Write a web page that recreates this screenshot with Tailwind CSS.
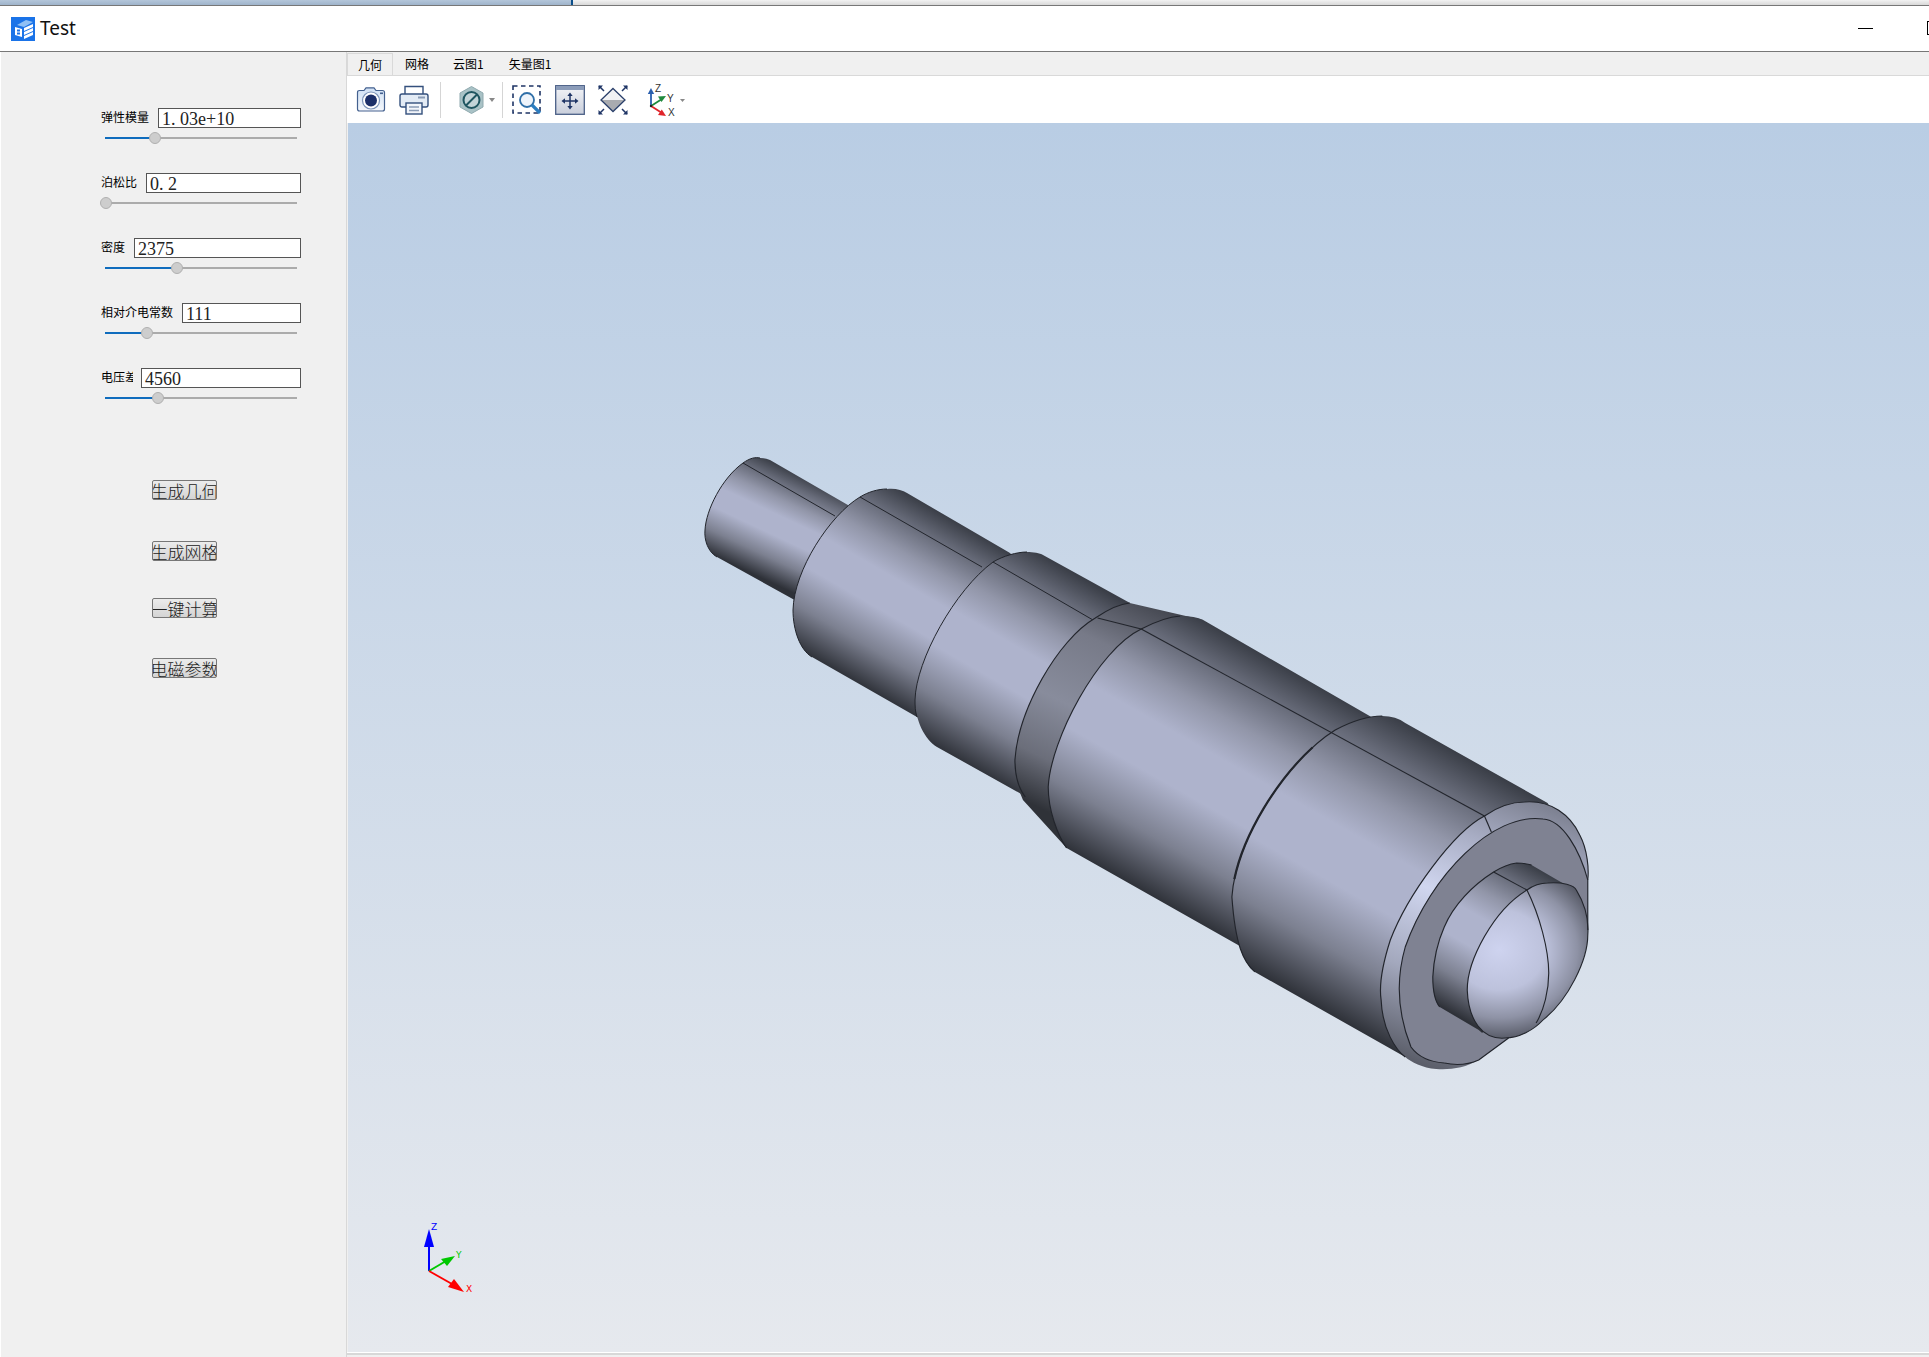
<!DOCTYPE html>
<html lang="zh">
<head>
    <meta charset="UTF-8">
    <title>Test</title>
    <script src="https://cdn.jsdelivr.net/npm/@tailwindcss/browser@4"></script>
</head>
<body class="bg-[#f0f0f0]">
<div class="w-[1929px] h-[1357px] overflow-hidden flex flex-col font-['Noto_Sans_CJK_SC',sans-serif] text-black">

    <!-- window behind -->
    <div class="h-[5px] flex shrink-0">
        <div class="w-[571px] bg-gradient-to-b from-[#b4c6da] to-[#9fb4cb]"></div>
        <div class="w-[2px] bg-[#0b4f8a]"></div>
        <div class="flex-1 bg-gradient-to-b from-[#f2f2f2] to-[#d8d8d8]"></div>
    </div>

    <!-- title bar -->
    <div class="h-[47px] shrink-0 bg-white border-y border-y-[#777] flex items-center relative">
        <svg class="ml-[11px] w-[24px] h-[24px]" viewBox="0 0 24 24">
            <rect width="24" height="24" fill="#1a73e8"/>
            <path d="M6 8 L15 3 L22 5 L13 10Z" fill="#8fc0f5"/>
            <path d="M13 11 L22 7 V10 L13 14Z M13 15 L22 11 V14 L13 18Z M13 19 L22 15 V18 L13 22Z" fill="#fff"/>
            <path d="M4 10 L11 12 V20 L4 18Z" fill="#fff"/>
            <path d="M6 12.5 h3 v2 h-3z M6 15.5 h3 v2 h-3z" fill="#1a73e8"/>
        </svg>
        <span class="ml-[5px] text-[19px] leading-none font-['Noto_Sans',sans-serif] text-[#111]">Test</span>
        <div class="absolute left-[1858px] top-[22px] w-[15px] h-px bg-black"></div>
        <div class="absolute left-[1927px] top-[15px] w-[8px] h-[14px] border border-black"></div>
    </div>

    <div class="flex-1 flex min-h-0">
        <!-- left panel -->
        <div class="w-[346px] shrink-0 border-l border-l-white pl-[100px] pt-[56px]">
            <div class="flex flex-col gap-[27px]">
                <div class="w-[200px]">
                    <div class="flex items-center h-[20px]">
                        <span class="w-[57px] shrink-0 text-[12px] leading-none -mt-[2px]">弹性模量</span>
                        <div class="w-[143px] h-[20px] bg-white border border-[#555] pl-[3px] font-['Liberation_Serif',serif] text-[18px] leading-[20px] text-[#222]">1. 03e+10</div>
                    </div>
                    <div class="relative h-[16px] ml-[4px] mt-[2px] w-[192px] flex items-center">
                        <div class="w-[46px] h-[2px] bg-[#0f6cbd]"></div>
                        <div class="flex-1 h-[2px] bg-[#ababab]"></div>
                        <div class="absolute left-[44px] top-[2px] w-[12px] h-[12px] rounded-full bg-[#cdcdcd] border border-[#b0b0b0]"></div>
                    </div>
                </div>
                <div class="w-[200px]">
                    <div class="flex items-center h-[20px]">
                        <span class="w-[45px] shrink-0 text-[12px] leading-none -mt-[2px]">泊松比</span>
                        <div class="w-[155px] h-[20px] bg-white border border-[#555] pl-[3px] font-['Liberation_Serif',serif] text-[18px] leading-[20px] text-[#222]">0. 2</div>
                    </div>
                    <div class="relative h-[16px] ml-[4px] mt-[2px] w-[192px] flex items-center">
                        <div class="flex-1 h-[2px] bg-[#ababab]"></div>
                        <div class="absolute left-[-5px] top-[2px] w-[12px] h-[12px] rounded-full bg-[#cdcdcd] border border-[#b0b0b0]"></div>
                    </div>
                </div>
                <div class="w-[200px]">
                    <div class="flex items-center h-[20px]">
                        <span class="w-[33px] shrink-0 text-[12px] leading-none -mt-[2px]">密度</span>
                        <div class="w-[167px] h-[20px] bg-white border border-[#555] pl-[3px] font-['Liberation_Serif',serif] text-[18px] leading-[20px] text-[#222]">2375</div>
                    </div>
                    <div class="relative h-[16px] ml-[4px] mt-[2px] w-[192px] flex items-center">
                        <div class="w-[68px] h-[2px] bg-[#0f6cbd]"></div>
                        <div class="flex-1 h-[2px] bg-[#ababab]"></div>
                        <div class="absolute left-[66px] top-[2px] w-[12px] h-[12px] rounded-full bg-[#cdcdcd] border border-[#b0b0b0]"></div>
                    </div>
                </div>
                <div class="w-[200px]">
                    <div class="flex items-center h-[20px]">
                        <span class="w-[81px] shrink-0 text-[12px] leading-none -mt-[2px]">相对介电常数</span>
                        <div class="w-[119px] h-[20px] bg-white border border-[#555] pl-[3px] font-['Liberation_Serif',serif] text-[18px] leading-[20px] text-[#222]">111</div>
                    </div>
                    <div class="relative h-[16px] ml-[4px] mt-[2px] w-[192px] flex items-center">
                        <div class="w-[38px] h-[2px] bg-[#0f6cbd]"></div>
                        <div class="flex-1 h-[2px] bg-[#ababab]"></div>
                        <div class="absolute left-[36px] top-[2px] w-[12px] h-[12px] rounded-full bg-[#cdcdcd] border border-[#b0b0b0]"></div>
                    </div>
                </div>
                <div class="w-[200px]">
                    <div class="flex items-center h-[20px]">
                        <span class="w-[32px] mr-[8px] shrink-0 text-[12px] leading-none -mt-[2px] overflow-hidden whitespace-nowrap">电压差</span>
                        <div class="w-[160px] h-[20px] bg-white border border-[#555] pl-[3px] font-['Liberation_Serif',serif] text-[18px] leading-[20px] text-[#222]">4560</div>
                    </div>
                    <div class="relative h-[16px] ml-[4px] mt-[2px] w-[192px] flex items-center">
                        <div class="w-[49px] h-[2px] bg-[#0f6cbd]"></div>
                        <div class="flex-1 h-[2px] bg-[#ababab]"></div>
                        <div class="absolute left-[47px] top-[2px] w-[12px] h-[12px] rounded-full bg-[#cdcdcd] border border-[#b0b0b0]"></div>
                    </div>
                </div>
            </div>

            <div class="ml-[51px] mt-[74px] flex flex-col items-start">
                <div class="w-[65px] h-[20px] rounded-[2px] border border-[#777] bg-gradient-to-b from-[#ececec] to-[#d4d4d4] overflow-hidden flex justify-center items-center whitespace-nowrap text-[17px] leading-none font-light text-[#222]">生成几何</div>
                <div class="mt-[41px] w-[65px] h-[20px] rounded-[2px] border border-[#777] bg-gradient-to-b from-[#ececec] to-[#d4d4d4] overflow-hidden flex justify-center items-center whitespace-nowrap text-[17px] leading-none font-light text-[#222]">生成网格</div>
                <div class="mt-[37px] w-[65px] h-[20px] rounded-[2px] border border-[#777] bg-gradient-to-b from-[#ececec] to-[#d4d4d4] overflow-hidden flex justify-center items-center whitespace-nowrap text-[17px] leading-none font-light text-[#222]">一键计算</div>
                <div class="mt-[40px] w-[65px] h-[20px] rounded-[2px] border border-[#777] bg-gradient-to-b from-[#ececec] to-[#d4d4d4] overflow-hidden flex justify-center items-center whitespace-nowrap text-[17px] leading-none font-light text-[#222]">电磁参数</div>
            </div>
        </div>

        <!-- right side -->
        <div class="flex-1 min-w-0 flex flex-col border-l border-l-[#d8d8d8]">
            <!-- tabs -->
            <div class="h-[24px] shrink-0 flex items-end border-b border-b-[#d9d9d9] text-[12px] leading-none">
                <div class="h-[23px] -mb-px w-[46px] flex items-center justify-center bg-[#f0f0f0] border border-[#d9d9d9]">几何</div>
                <div class="h-[23px] flex items-center pl-[12px] pr-[12px]">网格</div>
                <div class="h-[23px] flex items-center px-[12px]">云图1</div>
                <div class="h-[23px] flex items-center pl-[13px]">矢量图1</div>
            </div>

            <!-- toolbar -->
            <div class="h-[47px] shrink-0 bg-white flex items-center pl-[8px] border-l border-l-white">
                <!-- camera -->
                <svg class="w-[30px] h-[25px] shrink-0" viewBox="0 0 30 25">
                    <defs><linearGradient id="camBody" x1="0" y1="0" x2="0" y2="1"><stop offset="0" stop-color="#cfe0f4"/><stop offset="1" stop-color="#f4f7fb"/></linearGradient></defs>
                    <path d="M1.5 5.5 Q1.5 3.5 3.5 3.5 H8 L10 .8 H18 L20 3.5 H26.5 Q28.5 3.5 28.5 5.5 V22 Q28.5 24 26.5 24 H3.5 Q1.5 24 1.5 22Z" fill="url(#camBody)" stroke="#44618f" stroke-width="1.2"/>
                    <circle cx="15" cy="13.5" r="8.5" fill="#fff" stroke="#7c94b8" stroke-width="1.2"/>
                    <circle cx="15" cy="13.5" r="6" fill="#1b2f68"/>
                    <rect x="24" y="5.5" width="3" height="1.6" fill="#44618f"/>
                </svg>
                <!-- printer -->
                <svg class="w-[30px] h-[30px] ml-[13px] shrink-0" viewBox="0 0 30 30">
                    <path d="M6 9 V1.5 H24 V9" fill="#fff" stroke="#34507d" stroke-width="1.4"/>
                    <rect x="1" y="9" width="28" height="13" rx="2" fill="#e3ebf5" stroke="#34507d" stroke-width="1.4"/>
                    <rect x="19" y="11.5" width="7" height="2" fill="#8a9cb6"/>
                    <rect x="7" y="18" width="16" height="11" fill="#f2f5fa" stroke="#34507d" stroke-width="1.4"/>
                    <path d="M10 22 H20 M10 25.5 H20" stroke="#8a9cb6" stroke-width="1.5"/>
                </svg>
                <div class="w-px h-[36px] bg-[#d5d5d5] ml-[11px] shrink-0"></div>
                <!-- clip plane -->
                <svg class="w-[25px] h-[28px] ml-[18px] shrink-0" viewBox="0 0 25 28">
                    <path d="M12.5 .5 L24 7 V21 L12.5 27.5 L1 21 V7Z" fill="#a9c2c6" stroke="#8fa9ae"/>
                    <circle cx="12.5" cy="14" r="8" fill="#c3d4d8" stroke="#1f5560" stroke-width="2"/>
                    <path d="M7 19.5 L18 8.5" stroke="#1f5560" stroke-width="2"/>
                </svg>
                <svg class="w-[6px] h-[4px] ml-[5px] shrink-0" viewBox="0 0 6 4"><path d="M0 0H6L3 4Z" fill="#888"/></svg>
                <div class="w-px h-[36px] bg-[#d5d5d5] ml-[7px] shrink-0"></div>
                <!-- zoom window -->
                <svg class="w-[30px] h-[30px] ml-[9px] shrink-0" viewBox="0 0 30 30">
                    <rect x="1" y="1" width="27" height="27" fill="none" stroke="#1f3566" stroke-width="1.6" stroke-dasharray="4.5 3.5"/>
                    <circle cx="15" cy="15" r="7" fill="#eef4fb" stroke="#2f6fa8" stroke-width="1.8"/>
                    <path d="M20 20 L28 28" stroke="#2b7dc0" stroke-width="3.2"/>
                </svg>
                <!-- pan -->
                <svg class="w-[30px] h-[30px] ml-[13px] shrink-0" viewBox="0 0 30 30">
                    <defs><linearGradient id="panBody" x1="0" y1="0" x2="0" y2="1"><stop offset="0" stop-color="#f4f5f8"/><stop offset="1" stop-color="#c9cedb"/></linearGradient></defs>
                    <rect x=".7" y=".7" width="28.6" height="28.6" fill="url(#panBody)" stroke="#4a5f86" stroke-width="1.3"/>
                    <rect x="1" y="1" width="28" height="4" fill="#8b9cb9"/>
                    <path d="M15 9 V23 M8 16 H22" stroke="#1f3566" stroke-width="1.5"/>
                    <path d="M15 7.5 L12.3 11 H17.7Z M15 24.5 L12.3 21 H17.7Z M6.5 16 L10 13.3 V18.7Z M23.5 16 L20 13.3 V18.7Z" fill="#1f3566"/>
                </svg>
                <!-- fit all -->
                <svg class="w-[30px] h-[30px] ml-[13px] shrink-0" viewBox="0 0 30 30">
                    <path d="M15 4 L27 15 H3Z" fill="#f0f1f4"/>
                    <path d="M3 15 H27 L15 26Z" fill="#a9abb0"/>
                    <path d="M15 3.5 L27 15 L15 26.5 L3 15Z" fill="none" stroke="#2a3f6a" stroke-width="1.3"/>
                    <path d="M1 1 L6 6 M29 1 L24 6 M1 29 L6 24 M29 29 L24 24" stroke="#1f3566" stroke-width="1.5"/>
                    <path d="M.5 .5 H5 L.5 5Z M29.5 .5 H25 L29.5 5Z M.5 29.5 H5 L.5 25Z M29.5 29.5 H25 L29.5 25Z" fill="#1f3566"/>
                </svg>
                <!-- view axes -->
                <svg class="w-[40px] h-[34px] ml-[19px] shrink-0" viewBox="0 0 40 34">
                    <path d="M4 23 V9" stroke="#2a5fae" stroke-width="1.8"/>
                    <path d="M4 5 L.8 11 H7.2Z" fill="#2a5fae"/>
                    <path d="M4 23 L15 16" stroke="#1f8a3e" stroke-width="1.8"/>
                    <path d="M19 13 L11 13.5 L14.5 19Z" fill="#1f8a3e"/>
                    <path d="M4 23 L15 30" stroke="#e0252b" stroke-width="1.8"/>
                    <path d="M19 33 L11 32 L14.8 26.5Z" fill="#e0252b"/>
                    <circle cx="4" cy="23" r="1.2" fill="#222"/>
                    <text x="8" y="9" font-size="10" font-family="Liberation Sans" fill="#333">Z</text>
                    <text x="20" y="19" font-size="10" font-family="Liberation Sans" fill="#333">Y</text>
                    <text x="21" y="33" font-size="10" font-family="Liberation Sans" fill="#333">X</text>
                    <path d="M33 16 H38 L35.5 19Z" fill="#888"/>
                </svg>
            </div>

            <!-- 3d viewport -->
            <div class="h-[1229px] shrink-0 ml-px bg-gradient-to-b from-[#b9cde4] to-[#e6e9ee]">
                <svg class="block w-[1581px] h-[1229px]" viewBox="348 123 1581 1229">
                    <defs>
                        <linearGradient id="c1" gradientUnits="userSpaceOnUse" x1="770" y1="460" x2="723" y2="560">
                            <stop offset="0" stop-color="#3a3e47"/><stop offset=".13" stop-color="#666a78"/><stop offset=".28" stop-color="#9296a9"/><stop offset=".42" stop-color="#aeb3cc"/><stop offset=".6" stop-color="#aeb3cc"/><stop offset=".8" stop-color="#7c8090"/><stop offset="1" stop-color="#2e3138"/>
                        </linearGradient>
                        <linearGradient id="c2" gradientUnits="userSpaceOnUse" x1="907" y1="493" x2="812" y2="658">
                            <stop offset="0" stop-color="#3a3e47"/><stop offset=".13" stop-color="#666a78"/><stop offset=".28" stop-color="#9296a9"/><stop offset=".42" stop-color="#aeb3cc"/><stop offset=".6" stop-color="#aeb3cc"/><stop offset=".8" stop-color="#7c8090"/><stop offset="1" stop-color="#2e3138"/>
                        </linearGradient>
                        <linearGradient id="c3" gradientUnits="userSpaceOnUse" x1="1043" y1="555" x2="933" y2="746">
                            <stop offset="0" stop-color="#3a3e47"/><stop offset=".13" stop-color="#666a78"/><stop offset=".28" stop-color="#9296a9"/><stop offset=".42" stop-color="#aeb3cc"/><stop offset=".6" stop-color="#aeb3cc"/><stop offset=".8" stop-color="#7c8090"/><stop offset="1" stop-color="#2e3138"/>
                        </linearGradient>
                        <linearGradient id="c4" gradientUnits="userSpaceOnUse" x1="1177" y1="620" x2="1037" y2="835">
                            <stop offset="0" stop-color="#3a3e47"/><stop offset=".13" stop-color="#666a78"/><stop offset=".28" stop-color="#9296a9"/><stop offset=".42" stop-color="#aeb3cc"/><stop offset=".6" stop-color="#aeb3cc"/><stop offset=".8" stop-color="#7c8090"/><stop offset="1" stop-color="#2e3138"/>
                        </linearGradient>
                        <linearGradient id="c5" gradientUnits="userSpaceOnUse" x1="1353" y1="723" x2="1200" y2="958">
                            <stop offset="0" stop-color="#3a3e47"/><stop offset=".13" stop-color="#666a78"/><stop offset=".28" stop-color="#9296a9"/><stop offset=".42" stop-color="#aeb3cc"/><stop offset=".6" stop-color="#aeb3cc"/><stop offset=".8" stop-color="#7c8090"/><stop offset="1" stop-color="#2e3138"/>
                        </linearGradient>
                        <linearGradient id="band" gradientUnits="userSpaceOnUse" x1="1130" y1="600" x2="1020" y2="800">
                            <stop offset="0" stop-color="#43464f"/><stop offset=".25" stop-color="#777a88"/><stop offset=".55" stop-color="#888c9c"/><stop offset=".8" stop-color="#6b6e7a"/><stop offset="1" stop-color="#2f3238"/>
                        </linearGradient>
                        <linearGradient id="ring" gradientUnits="userSpaceOnUse" x1="1470" y1="800" x2="1350" y2="1060">
                            <stop offset="0" stop-color="#7b7f8f"/><stop offset=".2" stop-color="#a8adc4"/><stop offset=".42" stop-color="#d0d6ef"/><stop offset=".7" stop-color="#a3a8bd"/><stop offset="1" stop-color="#585b66"/>
                        </linearGradient>
                        <linearGradient id="stud" gradientUnits="userSpaceOnUse" x1="1463" y1="865" x2="1375" y2="1001">
                            <stop offset="0" stop-color="#3a3e47"/><stop offset=".13" stop-color="#666a78"/><stop offset=".28" stop-color="#9296a9"/><stop offset=".42" stop-color="#aeb3cc"/><stop offset=".6" stop-color="#aeb3cc"/><stop offset=".8" stop-color="#7c8090"/><stop offset="1" stop-color="#2e3138"/>
                        </linearGradient>
                        <radialGradient id="dome" gradientUnits="userSpaceOnUse" cx="1435" cy="950" r="100">
                            <stop offset="0" stop-color="#ced3ef"/><stop offset=".4" stop-color="#bdc2dc"/><stop offset=".68" stop-color="#8e92a5"/><stop offset="1" stop-color="#3b3e47"/>
                        </radialGradient>
                    </defs>

                    <!-- shaft sections, far to near -->
                    <path fill="url(#c1)" d="M760 458 Q766 458 770 460 L860 512 L800 603 L717 557 C708 552 704 540 705 530 C706 510 722 478 743 463 C750 458 755 457 760 458Z"/>
                    <path fill="url(#c2)" d="M887 489 C895 488 902 490 907 493 L1010 553 L1020 565 L930 725 L917 717 L812 657 C800 650 793 630 793 610 C794 570 830 515 860 497 C868 492 878 489 887 489Z"/>
                    <path fill="url(#c3)" d="M1027 552 C1033 552 1040 553 1043 555 L1130 603 L1125 625 L1030 805 L1023 795 L937 747 C925 740 915 720 915 700 C916 660 955 590 993 562 C1003 556 1017 552 1027 552Z"/>
                    <g fill="none" stroke="#22252c" stroke-width="1">
                        <path d="M717 557 C708 552 704 540 705 530 C706 510 722 478 743 463 C750 458 755 457 760 458"/>
                        <path d="M743 463 L835 516"/>
                        <path d="M812 657 C800 650 793 630 793 610 C794 570 830 515 860 497 C868 492 878 489 887 489"/>
                        <path d="M860 497 L982 567"/>
                        <path d="M917 717 C915 712 915 705 915 700 C916 660 955 590 993 562 C1003 556 1017 552 1027 552"/>
                        <path d="M993 562 L1093 620"/>
                    </g>

                    <g transform="translate(1000 0) scale(1.148 1) translate(-1000 0)">
                        <path fill="url(#band)" d="M1113 603 L1177 620 L1165 650 L1058 848 L1020 800 C1014 785 1013 770 1013 760 C1016 710 1050 640 1083 618 C1092 611 1103 604 1113 603Z"/>
                        <path fill="url(#c4)" d="M1157 616 Q1170 616 1177 620 L1322 716 L1340 730 L1240 930 L1212 948 L1058 848 C1050 835 1042 810 1042 787 C1044 740 1085 650 1123 629 C1133 623 1145 617 1157 616Z"/>
                        <path fill="url(#c5)" d="M1333 716 Q1345 716 1353 723 L1477 803 L1500 850 L1400 1050 L1353 1057 L1222 972 C1212 962 1205 945 1202 897 C1205 840 1250 760 1292 730 C1305 722 1320 716 1333 716Z"/>

                        <!-- end face -->
                        <path fill="url(#ring)" d="M1457 802 C1480 800 1497 815 1505 835 C1512 850 1513 870 1512 880 L1512 930 L1443 1038 L1417 1060 C1405 1068 1392 1070 1380 1069 C1368 1068 1358 1062 1353 1057 C1345 1050 1333 1030 1332 1000 C1330 985 1333 965 1340 940 C1355 895 1395 832 1422 816 C1432 808 1445 802 1457 802Z"/>
                        <path fill="#7f8292" d="M1473 819 C1490 820 1505 850 1512 880 L1512 930 L1443 1038 L1417 1060 C1405 1066 1395 1065 1387 1063 C1375 1062 1365 1058 1358 1047 C1345 1010 1346 975 1353 947 C1375 875 1430 812 1473 819Z"/>
                        <path fill="url(#stud)" d="M1450 863 Q1458 863 1463 865 L1490 883 L1500 920 L1420 1033 L1417 1030 L1383 1007 C1378 1000 1377 990 1377 977 C1378 955 1382 940 1387 927 C1395 905 1412 885 1430 872 C1437 867 1443 864 1450 863Z"/>
                        <path fill="url(#dome)" d="M1477 883 C1490 882 1500 885 1502 890 C1510 905 1513 920 1512 935 C1512 960 1495 1000 1473 1020 C1465 1030 1452 1038 1440 1038 C1420 1040 1408 1020 1407 990 C1407 960 1430 910 1459 890 C1465 885 1472 883 1477 883Z"/>

                        <g fill="none" stroke="#22252c" stroke-width="1">
                            <path d="M1022 797 C1014 785 1013 770 1013 760 C1016 710 1050 640 1083 618 C1092 611 1103 604 1113 603"/>
                            <path d="M1085 618 L1123 629"/>
                            <path d="M1058 848 C1050 835 1042 810 1042 787 C1044 740 1085 650 1123 629 C1133 623 1145 617 1157 616"/>
                            <path d="M1123 629 L1422 816"/>
                            <path d="M1222 972 C1212 962 1205 945 1202 897 C1205 840 1250 760 1292 730 C1305 722 1320 716 1333 716"/>
                            <path d="M1202 897 C1205 840 1250 760 1292 730" stroke-width="2" stroke-dasharray="150 200" stroke-dashoffset="-18"/>
                            <path d="M1422 816 L1428 832"/>
                            <path d="M1353 1057 C1345 1050 1333 1030 1332 1000 C1330 985 1333 965 1340 940 C1355 895 1395 832 1422 816 C1432 808 1445 802 1457 802 C1480 800 1497 815 1505 835 C1512 850 1513 870 1512 880 L1512 930"/>
                            <path d="M1387 1063 C1375 1062 1365 1058 1358 1047 C1345 1010 1346 975 1353 947 C1375 875 1430 812 1473 819 C1490 820 1505 850 1512 880"/>
                            <path d="M1387 1063 C1395 1065 1405 1066 1417 1060 L1443 1038"/>
                            <path d="M1383 1007 C1378 1000 1377 990 1377 977 C1378 955 1382 940 1387 927 C1395 905 1412 885 1430 872 C1437 867 1443 864 1450 863 Q1458 863 1463 865"/>
                            <path d="M1430 872 L1459 890"/>
                            <path d="M1440 1038 C1420 1040 1408 1020 1407 990 C1407 960 1430 910 1459 890 C1465 885 1472 883 1477 883 C1490 882 1500 885 1502 890 C1510 905 1513 920 1512 935 C1512 960 1495 1000 1473 1020 C1465 1030 1452 1038 1440 1038"/>
                            <path d="M1459 890 C1470 915 1478 950 1478 973 C1478 990 1474 1010 1467 1023"/>
                        </g>
                    </g>

                    <!-- axis triad -->
                    <path d="M429 1271 V1246" stroke="#0000ff" stroke-width="2"/>
                    <path d="M429 1229 L424 1247 H434Z" fill="#0000ff"/>
                    <path d="M429 1271 L446 1261" stroke="#00c800" stroke-width="2"/>
                    <path d="M455 1256 L441 1259 L447 1266Z" fill="#00c800"/>
                    <path d="M429 1271 L452 1284" stroke="#ff0000" stroke-width="2"/>
                    <path d="M464 1292 L454 1279 L448 1287Z" fill="#ff0000"/>
                    <text x="431" y="1230" font-size="9" font-family="DejaVu Sans" fill="#0000ff">Z</text>
                    <text x="456" y="1258" font-size="9" font-family="DejaVu Sans" fill="#00c800">Y</text>
                    <text x="466" y="1292" font-size="9" font-family="DejaVu Sans" fill="#ff0000">X</text>
                </svg>
            </div>
            <div class="h-px bg-white"></div>
            <div class="h-[2px] bg-[#d8d8d8]"></div>
        </div>
    </div>
</div>
</body>
</html>
